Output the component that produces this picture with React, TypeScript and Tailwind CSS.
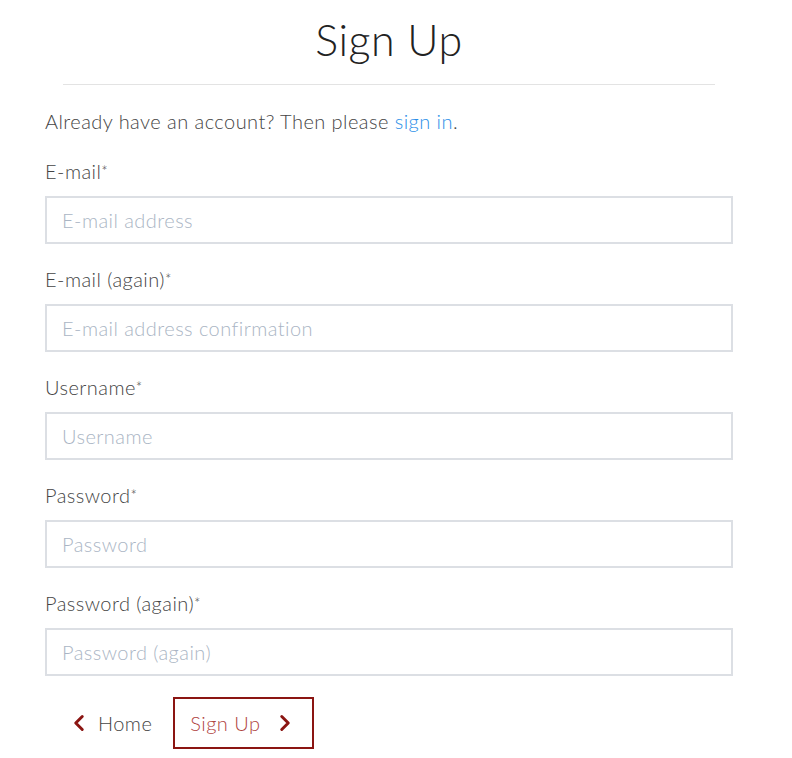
import { ChevronLeft, ChevronRight } from "lucide-react";

const fields = [
  { label: "E-mail", placeholder: "E-mail address", type: "email" },
  { label: "E-mail (again)", placeholder: "E-mail address confirmation", type: "email" },
  { label: "Username", placeholder: "Username", type: "text" },
  { label: "Password", placeholder: "Password", type: "password" },
  { label: "Password (again)", placeholder: "Password (again)", type: "password" },
];

export default function App() {
  return (
    <div className="min-h-[758px] bg-white font-['Lato','Open_Sans',sans-serif] font-light text-[#444] tracking-[0.45px]">
      <div className="ml-[45px] w-[688px] pt-[15px]">
        <h1 className="text-center text-[43px] leading-[50px] text-[#222] font-light tracking-[0.5px]">Sign Up</h1>
        <hr className="mx-[18px] mt-[19px] border-t border-[#e3e3e3]" />

        <p className="mt-[22px] text-[20px] leading-[28px]">
          Already have an account? Then please{" "}
          <a href="#" className="text-[#2a8ee8]">sign in</a>.
        </p>

        <form className="mt-[22px] flex flex-col">
          {fields.map((f) => (
            <div key={f.label} className="flex flex-col">
              <label className="text-[20px] leading-[28px]">
                {f.label}
                <span className="align-top text-[15px]">*</span>
              </label>
              <input
                type={f.type}
                placeholder={f.placeholder}
                className="mt-[11px] mb-[21px] h-[48px] w-full border-2 border-[#dcdfe4] px-[15px] text-[20px] font-light tracking-[0.45px] outline-none placeholder:text-[#aab5c4]"
              />
            </div>
          ))}

          <div className="flex items-center gap-[21px] pl-[21px]">
            <a href="#" className="flex items-center gap-[6px] text-[20px] text-[#444]">
              <ChevronLeft size={26} strokeWidth={2.75} className="text-[#8b1512]" />
              Home
            </a>
            <button
              type="submit"
              className="flex h-[52px] items-center gap-[12px] border-2 border-[#8b1512] pl-[15px] pr-[14px] text-[20px] text-[#b0443f]"
            >
              Sign Up
              <ChevronRight size={26} strokeWidth={2.75} className="text-[#8b1512]" />
            </button>
          </div>
        </form>
      </div>
    </div>
  );
}
